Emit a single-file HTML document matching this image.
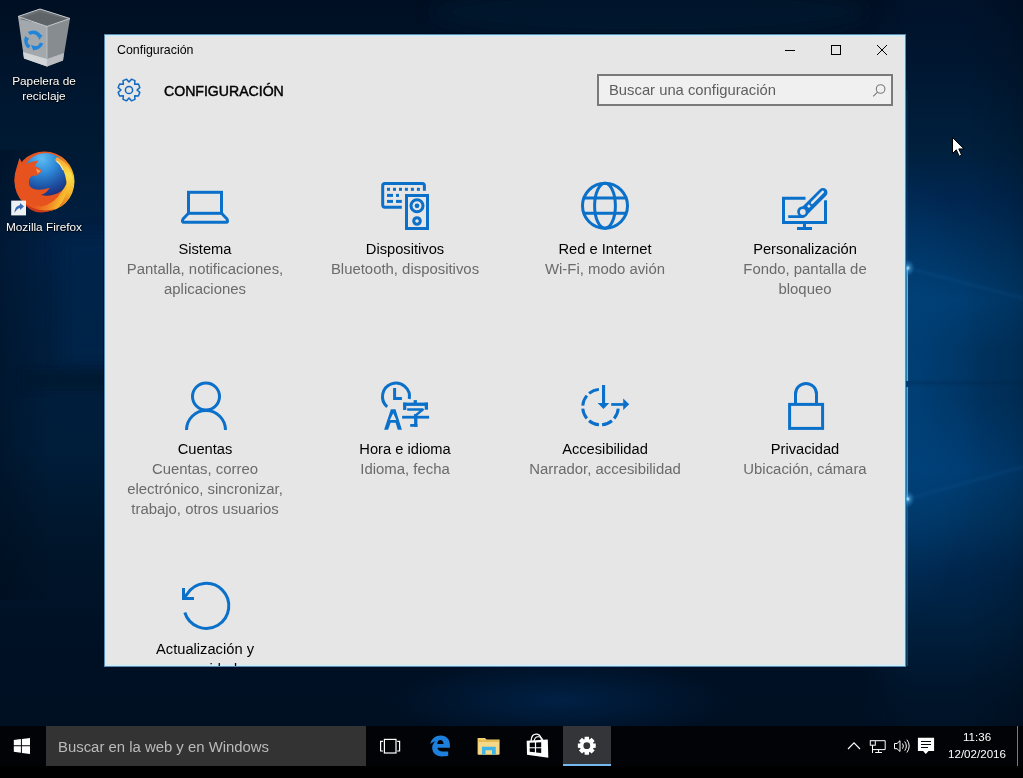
<!DOCTYPE html>
<html><head><meta charset="utf-8">
<style>
*{margin:0;padding:0;box-sizing:border-box}
html,body{width:1023px;height:778px;overflow:hidden}
body{position:relative;font-family:"Liberation Sans",sans-serif;background:#021530}
.dl{position:absolute;will-change:transform;color:#fff;font-size:11.8px;text-align:center;line-height:15px;white-space:nowrap;text-shadow:0 0 2px #000,0 1px 1px #000}
#win{position:absolute;left:104px;top:34px;width:802px;height:633px;background:#e6e6e6;border:1px solid #5a8cb0;box-shadow:inset 0 0 0 1px #c9effc,inset 0 0 0 2px #dfe7ee,-1px -1px 0 0 rgba(0,8,24,0.6),0 1px 0 0 rgba(0,10,50,0.6);overflow:hidden}
.tx{position:absolute;white-space:nowrap;line-height:20px;will-change:transform}
.ti{font-size:14.7px;color:#000;width:200px;text-align:center}
.su{font-size:14.9px;color:#6b6b6b;width:200px;text-align:center}
#search{position:absolute;left:492px;top:39px;width:296px;height:32px;border:2px solid #7a7a7a;background:#f0f0f0}
#tb{position:absolute;left:0;top:726px;width:1023px;height:52px;background:#000}
#tb .bar{position:absolute;left:0;top:0;width:1023px;height:40px;background:#020306}

</style></head><body>
<svg id="wallsvg" width="1023" height="726" viewBox="0 0 1023 726" style="position:absolute;left:0;top:0">
 <defs>
  <linearGradient id="gL" x1="0" y1="0" x2="0" y2="1">
   <stop offset="0" stop-color="#000f22"/>
   <stop offset="0.138" stop-color="#001731"/>
   <stop offset="0.207" stop-color="#001a34"/>
   <stop offset="0.344" stop-color="#002045"/>
   <stop offset="0.413" stop-color="#001f40"/>
   <stop offset="0.508" stop-color="#001e3d"/>
   <stop offset="0.62" stop-color="#001d3a"/>
   <stop offset="0.758" stop-color="#00152a"/>
   <stop offset="0.895" stop-color="#001024"/>
   <stop offset="1" stop-color="#001023"/>
  </linearGradient>
  <linearGradient id="gR" x1="0" y1="0" x2="0" y2="1">
   <stop offset="0" stop-color="#00122a"/>
   <stop offset="0.083" stop-color="#001630"/>
   <stop offset="0.207" stop-color="#00203e"/>
   <stop offset="0.275" stop-color="#002650"/>
   <stop offset="0.358" stop-color="#003463"/>
   <stop offset="0.413" stop-color="#003c70"/>
   <stop offset="0.482" stop-color="#003462"/>
   <stop offset="0.551" stop-color="#003361"/>
   <stop offset="0.647" stop-color="#003c72"/>
   <stop offset="0.716" stop-color="#003461"/>
   <stop offset="0.785" stop-color="#00264d"/>
   <stop offset="0.854" stop-color="#00203f"/>
   <stop offset="0.957" stop-color="#00142a"/>
   <stop offset="1" stop-color="#001226"/>
  </linearGradient>
  <linearGradient id="gLedge" x1="0" y1="0" x2="1" y2="0">
   <stop offset="0" stop-color="#000a18" stop-opacity="0.35"/>
   <stop offset="0.5" stop-color="#000a18" stop-opacity="0"/>
  </linearGradient>
  <linearGradient id="gRedge" x1="0" y1="0" x2="1" y2="0">
   <stop offset="0" stop-color="#000" stop-opacity="0"/>
   <stop offset="0.5" stop-color="#000" stop-opacity="0"/>
   <stop offset="0.9" stop-color="#000" stop-opacity="0.12"/>
   <stop offset="1" stop-color="#000" stop-opacity="0.18"/>
  </linearGradient>
  <radialGradient id="gspot" cx="0.5" cy="0.5" r="0.5">
   <stop offset="0" stop-color="#d0f0ff" stop-opacity="1"/>
   <stop offset="0.3" stop-color="#4aa6e0" stop-opacity="0.6"/>
   <stop offset="1" stop-color="#1a6ab0" stop-opacity="0"/>
  </radialGradient>
  <radialGradient id="gglow" cx="0.5" cy="0.5" r="0.5">
   <stop offset="0" stop-color="#002248" stop-opacity="0.9"/>
   <stop offset="1" stop-color="#002248" stop-opacity="0"/>
  </radialGradient>
  <radialGradient id="gedgeglow" cx="0.5" cy="0.5" r="0.5">
   <stop offset="0" stop-color="#004a88" stop-opacity="0.55"/>
   <stop offset="1" stop-color="#004a88" stop-opacity="0"/>
  </radialGradient>
  <linearGradient id="gmaskR" x1="860" y1="0" x2="906" y2="0" gradientUnits="userSpaceOnUse">
   <stop offset="0" stop-color="#fff" stop-opacity="0"/>
   <stop offset="1" stop-color="#fff" stop-opacity="1"/>
  </linearGradient>
  <mask id="maskR" maskUnits="userSpaceOnUse" x="0" y="0" width="1023" height="726"><rect x="860" y="0" width="163" height="726" fill="url(#gmaskR)"/></mask>
  <filter id="blur8" x="-100%" y="-100%" width="300%" height="300%"><feGaussianBlur stdDeviation="8"/></filter>
  <filter id="blur3" x="-50%" y="-100%" width="200%" height="300%"><feGaussianBlur stdDeviation="3"/></filter>
  <filter id="blur2" x="-50%" y="-200%" width="200%" height="500%"><feGaussianBlur stdDeviation="1.5"/></filter>
 </defs>
 <rect width="1023" height="726" fill="url(#gL)"/>
 <rect x="0" y="150" width="104" height="450" fill="url(#gLedge)"/>
 <rect x="62" y="235" width="60" height="130" fill="#00274f" opacity="0.6" filter="url(#blur8)"/>
 <rect x="20" y="370" width="100" height="21" fill="#00132b" opacity="0.5" filter="url(#blur3)"/>
 <ellipse cx="560" cy="700" rx="170" ry="40" fill="url(#gglow)"/>
 <ellipse cx="650" cy="12" rx="220" ry="25" fill="#001a34" opacity="0.5" filter="url(#blur8)"/>
 <!-- right strip -->
 <g mask="url(#maskR)"><rect x="860" y="0" width="163" height="726" fill="url(#gR)"/></g>
 <rect x="906" y="0" width="117" height="726" fill="url(#gRedge)"/>
 <ellipse cx="906" cy="390" rx="75" ry="230" fill="url(#gedgeglow)"/>
 <rect x="906" y="381" width="117" height="4" fill="#002244" opacity="0.25" filter="url(#blur2)"/>
 <rect x="906.5" y="268" width="1.5" height="113" fill="#66c2e6" opacity="0.9"/>
 <rect x="906.5" y="387" width="1.5" height="113" fill="#5db8dc" opacity="0.85"/>
 <rect x="906.5" y="500" width="1.2" height="166" fill="#4aa0d0" opacity="0.45"/>
 <rect x="906.5" y="90" width="1" height="178" fill="#2a6aa0" opacity="0.3"/>
 <path d="M907 268 L1023 298" stroke="#2a80c8" stroke-width="3" opacity="0.1" filter="url(#blur2)"/>
 <path d="M907 499 L1023 467" stroke="#2a80c8" stroke-width="3" opacity="0.1" filter="url(#blur2)"/>
 <ellipse cx="908" cy="268" rx="7" ry="9" fill="url(#gspot)"/>
 <ellipse cx="908" cy="499" rx="7" ry="9" fill="url(#gspot)"/>
</svg>

<div class="dl" style="left:4px;top:74px;width:80px">Papelera de<br>reciclaje</div>
<div class="dl" style="left:4px;top:220px;width:80px">Mozilla Firefox</div>

<div id="win">
 <div class="tx" style="left:12px;top:5px;font-size:12.4px;color:#000;">Configuración</div>
 <div class="tx" style="left:59px;top:46px;font-size:14.1px;color:#000;-webkit-text-stroke:0.45px #000;">CONFIGURACIÓN</div>
 <div id="search"><div class="tx" style="left:10px;top:4px;font-size:14.8px;color:#5e5e5e;">Buscar una configuración</div></div>

 <div class="tx ti" style="left:0;top:204px">Sistema</div>
 <div class="tx su" style="left:0;top:224px">Pantalla, notificaciones,<br>aplicaciones</div>
 <div class="tx ti" style="left:200px;top:204px">Dispositivos</div>
 <div class="tx su" style="left:200px;top:224px">Bluetooth, dispositivos</div>
 <div class="tx ti" style="left:400px;top:204px">Red e Internet</div>
 <div class="tx su" style="left:400px;top:224px">Wi-Fi, modo avión</div>
 <div class="tx ti" style="left:600px;top:204px">Personalización</div>
 <div class="tx su" style="left:600px;top:224px">Fondo, pantalla de<br>bloqueo</div>

 <div class="tx ti" style="left:0;top:404px">Cuentas</div>
 <div class="tx su" style="left:0;top:424px">Cuentas, correo<br>electrónico, sincronizar,<br>trabajo, otros usuarios</div>
 <div class="tx ti" style="left:200px;top:404px">Hora e idioma</div>
 <div class="tx su" style="left:200px;top:424px">Idioma, fecha</div>
 <div class="tx ti" style="left:400px;top:404px">Accesibilidad</div>
 <div class="tx su" style="left:400px;top:424px">Narrador, accesibilidad</div>
 <div class="tx ti" style="left:600px;top:404px">Privacidad</div>
 <div class="tx su" style="left:600px;top:424px">Ubicación, cámara</div>

 <div class="tx ti" style="left:0;top:604px">Actualización y<br>seguridad</div>
</div>

<div id="tb"><div class="bar"></div>
 <div style="position:absolute;left:46px;top:0;width:320px;height:40px;background:#333333"></div>
 <div class="tx" style="left:58px;top:10.5px;font-size:14.9px;color:#bababa">Buscar en la web y en Windows</div>
 <div style="position:absolute;left:563px;top:0;width:48px;height:40px;background:#343538"></div>
 <div style="position:absolute;left:563px;top:38px;width:48px;height:2px;background:#76b9ed"></div>
 <div class="tx" style="left:947px;top:2px;width:60px;text-align:center;font-size:11.6px;line-height:17px;color:#fff">11:36<br>12/02/2016</div>
 <div style="position:absolute;left:1017px;top:0;width:1px;height:40px;background:#7a7a7a"></div>
</div>

<svg width="1023" height="778" viewBox="0 0 1023 778" style="position:absolute;left:0;top:0">
<path d="M139.83 92.42 L138.37 95.95 L134.66 95.66 L134.95 99.37 L131.42 100.83 L129.00 98.00 L126.58 100.83 L123.05 99.37 L123.34 95.66 L119.63 95.95 L118.17 92.42 L121.00 90.00 L118.17 87.58 L119.63 84.05 L123.34 84.34 L123.05 80.63 L126.58 79.17 L129.00 82.00 L131.42 79.17 L134.95 80.63 L134.66 84.34 L138.37 84.05 L139.83 87.58 L137.00 90.00Z" fill="none" stroke="#1169c0" stroke-width="1.5" stroke-linejoin="round"/>
<circle cx="129" cy="90" r="3.6" fill="none" stroke="#1169c0" stroke-width="1.5"/>
<path d="M618.23 408.65 A17.80 17.80 0 0 1 614.14 418.54 M611.94 420.74 A17.80 17.80 0 0 1 602.05 424.83 M598.95 424.83 A17.80 17.80 0 0 1 589.06 420.74 M586.86 418.54 A17.80 17.80 0 0 1 582.77 408.65 M582.77 405.55 A17.80 17.80 0 0 1 586.86 395.66 M589.06 393.46 A17.80 17.80 0 0 1 598.95 389.37 " fill="none" stroke="#0a70c9" stroke-width="3"/>
<path d="M387.14 406.79 A13.50 13.50 0 1 1 409.29 398.94" fill="none" stroke="#0a70c9" stroke-width="3"/>
<path d="M593.33 743.46 L595.75 743.55 L595.75 747.85 L593.33 747.94 L593.00 748.74 L594.64 750.51 L591.61 753.54 L589.84 751.90 L589.04 752.23 L588.95 754.65 L584.65 754.65 L584.56 752.23 L583.76 751.90 L581.99 753.54 L578.96 750.51 L580.60 748.74 L580.27 747.94 L577.85 747.85 L577.85 743.55 L580.27 743.46 L580.60 742.66 L578.96 740.89 L581.99 737.86 L583.76 739.50 L584.56 739.17 L584.65 736.75 L588.95 736.75 L589.04 739.17 L589.84 739.50 L591.61 737.86 L594.64 740.89 L593.00 742.66Z M590.20 745.70 A3.40 3.40 0 1 0 583.40 745.70 A3.40 3.40 0 1 0 590.20 745.70 Z" fill="#fff" fill-rule="evenodd"/>
 <g fill="none" stroke="#0a70c9" stroke-width="3">
  <rect x="188.5" y="192.3" width="33" height="21" />
  <path d="M188.5 213.3 L183 219 Q181.5 222.3 184 222.3 L226 222.3 Q228.5 222.3 227 219 L221.5 213.3" stroke-linejoin="round"/>
  <path d="M401.8 207.2 H385 Q382.7 207.2 382.7 205 V185.5 Q382.7 183.4 385 183.4 H422.3 Q424.4 183.4 424.4 185.5 V190.8"/>
  <rect x="406.5" y="195.5" width="21" height="33"/>
  <circle cx="417" cy="205.8" r="6"/>
  <circle cx="417" cy="221" r="3.3"/>
  <circle cx="605" cy="205.8" r="22.5"/>
  <ellipse cx="605" cy="205.8" rx="10.4" ry="22.5"/>
  <path d="M584 198.1 H626 M584 213.3 H626"/>
  <circle cx="206" cy="396.5" r="13.5"/>
  <path d="M186.5 430 A19.5 19.5 0 0 1 225.5 430"/>
  <rect x="789.6" y="404.4" width="33" height="24"/>
  <path d="M795.5 404.4 V393.9 A10.5 10.5 0 0 1 816.5 393.9 V404.4"/>
  <path d="M183.5 598.5 L187.2 594 A22.5 22.5 0 1 1 184.8 612.5"/>
  <path d="M183.5 588 V598.5 H194"/>
  <!-- personalizacion monitor -->
  <path d="M805.5 198.3 H783.5 V222.5 H825.5 V200.3"/>
  <!-- clock L -->
  <path d="M394.6 388 V398.4 H401.9"/>
 </g>
 <g fill="#0a70c9">
  <circle cx="417" cy="205.8" r="2.4"/>
  <rect x="387.0" y="187.8" width="3" height="3"/>
  <rect x="393.0" y="187.8" width="3" height="3"/>
  <rect x="399.0" y="187.8" width="3" height="3"/>
  <rect x="404.9" y="187.8" width="3" height="3"/>
  <rect x="410.9" y="187.8" width="3" height="3"/>
  <rect x="416.9" y="187.8" width="3" height="3"/>
  <rect x="387" y="193.9" width="6" height="3"/>
  <rect x="396" y="193.9" width="3" height="3"/>
  <rect x="387" y="199.9" width="6" height="3"/>
  <rect x="396" y="199.9" width="5.8" height="3"/>
  <rect x="803" y="224" width="3" height="4"/>
  <rect x="797" y="227" width="15" height="3"/>
  <!-- brush -->
  <g>
   <path d="M823 192.5 L806.5 209" stroke="#e6e6e6" stroke-width="13" stroke-linecap="round"/>
   <circle cx="802.8" cy="211.8" r="7.6" fill="#e6e6e6"/>
   <path d="M823 192.5 L806.5 209" stroke="#0a70c9" stroke-width="9" stroke-linecap="round"/>
   <circle cx="802.8" cy="211.8" r="5.6"/>
   <path d="M788.2 215.2 H799.5 L806.5 209 L809.7 212.2 L804.6 217.3 Q803.9 218 803 218 H788.2 Z"/>
   <path d="M822.8 191.8 L812 202.8" stroke="#e6e6e6" stroke-width="2.5" stroke-linecap="round"/>
   <rect x="807.6" y="204.9" width="2.6" height="2.6" fill="#e6e6e6" transform="rotate(45 808.9 206.2)"/>
   <circle cx="802.8" cy="212" r="2.9" fill="#e6e6e6"/>
  </g>
  <!-- A -->
  <path fill-rule="evenodd" d="M390.9 409.2 H395.5 L401.9 429.8 H397.8 L395.6 422.7 H390.6 L388.1 429.8 H384.1 Z M393.2 413.3 L396.3 419.9 H389.9 Z"/>
  <!-- 字 -->
  <rect x="413.6" y="400.1" width="3.3" height="3"/>
  <rect x="403.1" y="402.6" width="24.9" height="3.3"/>
  <rect x="403.1" y="402.6" width="3.2" height="7.4"/>
  <rect x="424.7" y="402.6" width="3.3" height="7.1"/>
  <path d="M407.2 408.2 H423.2 L424.2 410 L417.4 415.5 H413.6 L419.5 410.8 H407.2 Z"/>
  <rect x="402.1" y="415.8" width="27" height="2.8"/>
  <rect x="414.1" y="414" width="3.3" height="12.8"/>
  <rect x="410.2" y="424" width="7.2" height="2.8"/>
  <!-- access arrows -->
  <rect x="602" y="385" width="3.1" height="19"/>
  <path d="M597.6 403.1 H609.3 L603.5 408.9 Z"/>
  <rect x="611.2" y="403.1" width="12.5" height="2.7"/>
  <path d="M623.2 398.5 L629.2 404.3 L623.2 410.1 Z"/>
 </g>
 <!-- title bar buttons -->
 <g stroke="#000" stroke-width="1" fill="none">
  <path d="M785 50.5 H795"/>
  <rect x="831.5" y="45.5" width="9" height="9"/>
  <path d="M877 45 L887 55 M887 45 L877 55"/>
 </g>
 <!-- search magnifier -->
 <g stroke="#7a7a7a" stroke-width="1.1" fill="none">
  <circle cx="880.6" cy="89" r="4.3"/>
  <path d="M877.5 92.1 L873.2 96.4"/>
 </g>
 <!-- recycle bin -->
 <g>
  <polygon points="18,16.5 47,26.5 47,66.5 24,58.5" fill="#a3a8ad"/>
  <polygon points="47,26.5 70,18.5 63,60.5 47,66.5" fill="#878c91"/>
  <polygon points="18,16.5 40,9 70,18.5 47,26.5" fill="#6b7075"/>
  <polygon points="20,19 40,12 67,19.5 47,25.5" fill="#5f6469"/>
  <polyline points="18,16.5 40,9 70,18.5 47,26.5 18,16.5" fill="none" stroke="#c9cdd1" stroke-width="1"/>
  <polygon points="23,52 47,59 47,66.5 24,58.5" fill="#d3d6d9"/>
  <polygon points="47,59 64,53 63,60.5 47,66.5" fill="#b9bdc1"/>
  <path d="M47 26.5 V66.5" stroke="#c3c7cb" stroke-width="0.8"/>
  <g fill="none" stroke="#1f86dc" stroke-width="3.6">
   <path d="M29 33.5 A7 7 0 0 1 39.5 36.5"/>
   <path d="M26.5 38.5 A7 7 0 0 0 29.5 47"/>
   <path d="M33.5 48 A7 7 0 0 0 41.5 43"/>
  </g>
  <g fill="#1f86dc">
   <path d="M37.5 33 L42.5 35.5 L39 40 Z"/>
   <path d="M24.5 41 L25 36 L29.5 39 Z"/>
   <path d="M31 45 L33.5 51 L36.5 46.5 Z"/>
  </g>
 </g>
 <!-- firefox -->
 <defs>
  <radialGradient id="ffglobe" cx="0.42" cy="0.12" r="0.95">
   <stop offset="0" stop-color="#5fbdf2"/>
   <stop offset="0.35" stop-color="#2f8ad8"/>
   <stop offset="0.65" stop-color="#1f55a8"/>
   <stop offset="1" stop-color="#18206a"/>
  </radialGradient>
  <linearGradient id="fffox" x1="0" y1="0" x2="1" y2="0.4">
   <stop offset="0" stop-color="#e4501f"/>
   <stop offset="0.6" stop-color="#e9561e"/>
   <stop offset="0.82" stop-color="#f08a24"/>
   <stop offset="1" stop-color="#f7c932"/>
  </linearGradient>
  <linearGradient id="ffflame" x1="0" y1="0" x2="0" y2="1">
   <stop offset="0" stop-color="#f7a02a"/>
   <stop offset="0.35" stop-color="#fbe04a"/>
   <stop offset="0.7" stop-color="#f7b52c"/>
   <stop offset="1" stop-color="#ea6a1f"/>
  </linearGradient>
 </defs>
 <circle cx="44.5" cy="181.5" r="30" fill="url(#fffox)"/>
 <circle cx="45.5" cy="175.5" r="22.5" fill="url(#ffglobe)"/>
 <path d="M57 157 Q72 165 73.5 182 Q73 200 58 208 Q68 196 66.5 182 Q65 168 55 160 Z" fill="url(#ffflame)"/>
 <path d="M56.5 161 Q61 164 63 170" stroke="#fff6c0" stroke-width="1.2" fill="none" opacity="0.8"/>
 <path d="M19.5 158 L23.5 165.5 Q30 161.5 38.5 160.5 L34.5 166 Q39 167.5 42.3 171 L37 175.5 L31.5 176 Q27 181 30 186.5 Q36 192.5 49.7 187.7 Q46.5 193.5 41 195 Q53 197.5 62 190.5 Q55 204 41 206.5 Q25 205 17.5 193 Q12 180 16.5 168 Z" fill="#e6531f"/>
 <path d="M36 168.5 L41 171 L37.5 173.5 Z" fill="#f39a6a"/>
 <path d="M22 201 Q36 214 56 209 Q45 213.5 36 212 Q27 209 22 201 Z" fill="#c93a1a"/>
 <rect x="11.2" y="200.6" width="14.8" height="14.8" fill="#eef1f4"/>
 <path d="M14.5 213 Q14.5 206 20 205 V203 L24 206.5 L20 210 V208 Q17 208.5 14.5 213 Z" fill="#3c6cb4"/>
 <!-- windows logo -->
 <g fill="#fff">
  <polygon points="13.8,739.9 20.9,739 20.9,745.2 13.8,745.2"/>
  <polygon points="21.9,738.9 30,737.9 30,745.2 21.9,745.2"/>
  <polygon points="13.8,746.2 20.9,746.2 20.9,752.7 13.8,751.8"/>
  <polygon points="21.9,746.2 30,746.2 30,754.1 21.9,753"/>
 </g>
 <!-- task view -->
 <g fill="none" stroke="#fff" stroke-width="1.2">
  <rect x="384.4" y="739.4" width="11.6" height="13.6"/>
  <path d="M383 741.4 H380.6 V751 H383 M397.2 741.4 H399.6 V751 H397.2"/>
 </g>
 <!-- edge -->
 <path fill="#1e80dc" fill-rule="evenodd" d="M430.3 744 C431.5 738.5 435.5 735.5 440.8 735.5 C446.5 735.5 449.9 739.5 449.9 745 V747.8 H437.4 C437.8 750.2 439.6 751.4 442.5 751.4 H448.2 V755.8 C446.8 756.2 444.5 756.4 442 756.4 C436 756.4 432.2 752.8 432.2 747.5 C432.2 745.2 433.3 742.8 435.6 741.2 C433.2 741.9 431.5 742.8 430.3 744 Z M437.2 743.9 H443.6 C443.4 741.6 442 740.1 440.3 740.1 C438.6 740.1 437.4 741.6 437.2 743.9 Z"/>
 <!-- explorer -->
 <g>
  <polygon points="477.6,738 485,738 486.5,739.5 499.6,739.5 499.6,754.6 477.6,754.6" fill="#f1cf6b"/>
  <rect x="478.5" y="740" width="20.2" height="2" fill="#e6bb55"/>
  <rect x="478.5" y="742" width="20.2" height="12.6" fill="#f6d88a"/>
  <path d="M482 746.7 H495.8 V754.6 H492 V750.2 H485.5 V754.6 H482 Z" fill="#3db4e8"/>
 </g>
 <!-- store -->
 <g>
  <path d="M531 741 Q531.5 733.5 537 734.2 Q541.5 735 541.5 741.5" fill="none" stroke="#fff" stroke-width="1.3"/>
  <path d="M534 741 Q535 736 539 736.8 Q542.5 737.5 543.5 742" fill="none" stroke="#fff" stroke-width="1.1"/>
  <polygon points="526.7,740.8 547.8,739.6 548.3,757.7 527,754.8" fill="#fff"/>
  <g fill="#020306">
   <polygon points="529.7,742.8 534.9,742.6 534.9,747.2 529.7,747.2"/>
   <polygon points="536.1,742.5 541.2,742.3 541.2,747.2 536.1,747.2"/>
   <polygon points="529.7,748.3 534.9,748.3 534.9,752.3 529.7,751.8"/>
   <polygon points="536.1,748.3 541.2,748.3 541.2,753 536.1,752.5"/>
  </g>
 </g>
 <!-- tray chevron -->
 <path d="M848 749 L854 742.8 L860 749" fill="none" stroke="#fff" stroke-width="1.1"/>
 <!-- network -->
 <g fill="none" stroke="#fff" stroke-width="1">
  <path d="M875.5 740.7 H885.2 V749.6 H872.5 V745.5"/>
  <path d="M878.6 749.6 V752.5 M875.2 752.5 H882"/>
  <rect x="870.3" y="740.7" width="5" height="4.5"/>
  <path d="M872.5 745.2 V753"/>
 </g>
 <!-- volume -->
 <g fill="none" stroke="#fff" stroke-width="1">
  <path d="M894.5 743.5 H897 L900 740.7 V751.5 L897 748.7 H894.5 Z"/>
  <path d="M902.5 743.5 Q904.3 746 902.5 748.7"/>
  <path d="M904.7 741.5 Q908 746 904.7 750.7"/>
  <path d="M906.9 739.7 Q911.5 746 906.9 752.5"/>
 </g>
 <!-- action center -->
 <path d="M917.9 737.8 H934.1 V751 H928.5 L925.8 753.9 L923.1 751 H917.9 Z" fill="#fff"/>
 <g fill="#020306">
  <rect x="921" y="741" width="10" height="1"/>
  <rect x="921" y="744" width="10" height="1"/>
  <rect x="921" y="747" width="7" height="1"/>
 </g>
 <!-- cursor -->
 <path d="M952.5 137.5 V153.5 L956.3 149.8 L959.2 156.2 L961.6 155.1 L958.8 148.9 H964 Z" fill="#fff" stroke="#000" stroke-width="1" stroke-linejoin="miter"/>

</svg>
</body></html>
